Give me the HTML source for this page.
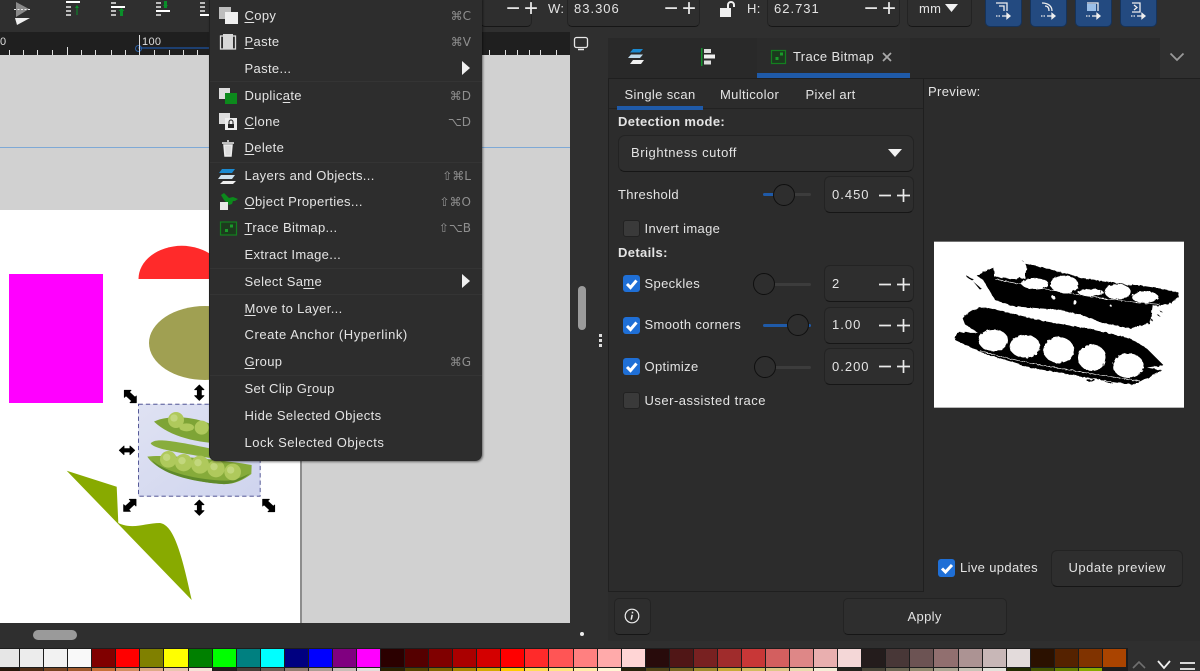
<!DOCTYPE html>
<html><head><meta charset="utf-8"><style>
html,body{margin:0;padding:0;width:1200px;height:671px;overflow:hidden;background:#2f2f2f}
body{position:relative;font-family:"Liberation Sans","DejaVu Sans",sans-serif;font-size:13px;color:#e4e4e4;letter-spacing:.35px}
.a{position:absolute}
.t{position:absolute;white-space:nowrap;line-height:16px}
.m{margin-top:1px}
.b{position:absolute;box-sizing:border-box;background:#2e2e2e;border-radius:5px;border:1px solid #232323;border-bottom:1px solid #161616}
.s{color:#8f8f8f;font-family:"DejaVu Sans",sans-serif;font-size:12px;right:11px;letter-spacing:0}
.cb{position:absolute;width:17px;height:17px;border-radius:3px;box-sizing:border-box}
.on{background:#1f6fd6}
.off{background:#3a3a3a;border:1px solid #222}
.kn{position:absolute;width:20px;height:20px;border-radius:50%;background:#2e2e2e;border:1.5px solid #0f0f0f;box-sizing:border-box}
.tr{position:absolute;height:3px;background:#3c3c3c;border-radius:2px}
.sep{position:absolute;left:0;right:0;height:1px;background:#343434}
u{text-underline-offset:2px;text-decoration-thickness:1px}
svg{position:absolute;overflow:visible}
#sw{position:absolute;left:-4px;top:649px;width:1132px;display:grid;grid-template-columns:repeat(47,23.07px);grid-auto-rows:18px;gap:1px 1px}
#sw i{display:block}
</style></head><body>

<!-- top toolbar -->
<div class="a" style="left:0;top:0;width:1200px;height:32px;background:#2f2f2f"></div>
<svg style="left:0;top:0" width="210" height="32" viewBox="0 0 210 32">
<path d="M16 2L29 9 16 17z" fill="#8a8a8a"/><path d="M15 18H30L17 25z" fill="#f0f0f0"/><path d="M14 9.500H31" stroke="#e8e8e8" stroke-width="1" stroke-dasharray="2 1.500"/>
<g fill="#bbb"><rect x="66" y="6" width="5" height="2"/><rect x="66" y="10" width="5" height="2"/><rect x="66" y="14" width="5" height="2"/></g><rect x="66" y="1" width="14" height="2" fill="#fff"/><path d="M76.500 15V8h-1.500L77 5l2 3h-1.500v7z" fill="#0a8f2a"/>
<g fill="#bbb"><rect x="111" y="2" width="5" height="2"/><rect x="111" y="10" width="5" height="2"/><rect x="111" y="14" width="5" height="2"/></g><rect x="111" y="6" width="14" height="2" fill="#fff"/><rect x="120" y="10" width="3" height="6" fill="#0a8f2a"/><path d="M118.500 11L121.500 8l3 3z" fill="#0a8f2a"/>
<g fill="#bbb"><rect x="156" y="2" width="5" height="2"/><rect x="156" y="6" width="5" height="2"/><rect x="156" y="14" width="5" height="2"/></g><rect x="156" y="10" width="14" height="2" fill="#fff"/><rect x="164" y="1" width="3" height="7" fill="#0a8f2a"/><path d="M163 5h5l-2.500 3z" fill="#0a8f2a"/>
<g fill="#bbb"><rect x="200" y="2" width="5" height="2"/><rect x="200" y="6" width="5" height="2"/><rect x="200" y="10" width="5" height="2"/></g><rect x="200" y="14" width="10" height="2" fill="#fff"/>
</svg>

<!-- ruler -->
<div class="a" style="left:0;top:32px;width:570px;height:23px;background:#1f1f1f"></div>
<div class="t" style="left:0;top:34px;font-size:11px;color:#ddd">0</div>
<div class="t" style="left:142px;top:34px;font-size:11px;color:#ddd">100</div>
<div class="a" style="left:138px;top:47px;width:72px;height:2px;background:#1d3f70"></div>
<div class="a" style="left:135px;top:45px;width:5px;height:5px;border:1px solid #2a5fa5;border-radius:50%"></div>
<svg style="left:0;top:32px" width="570" height="23" id="rul"><path d="M9.500 18v5M23.500 18v5M37.500 18v5M52.500 18v5M67.500 15v8M81.500 18v5M95.500 18v5M111.500 18v5M125.500 18v5M139.500 3v20M154.500 18v5M169.500 18v5M183.500 18v5M197.500 18v5M489.500 18v5M505.500 18v5M517.500 18v5M529.500 18v5M540.500 18v5M556.500 18v5" stroke="#e0e0e0" stroke-width="1" fill="none"/></svg>

<!-- canvas -->
<div class="a" style="left:0;top:55px;width:570px;height:568px;background:#d1d1d1"></div>
<div class="a" style="left:0;top:147px;width:570px;height:1px;background:#7ea9d6"></div>
<div class="a" style="left:0;top:210px;width:300px;height:413px;background:#fff"></div>
<div class="a" style="left:300px;top:212px;width:2px;height:411px;background:#8d8d8d"></div>
<div class="a" style="left:9px;top:274px;width:94px;height:129px;background:#ff00ff"></div>
<svg style="left:0;top:210px" width="300" height="413" viewBox="0 210 300 413">
<path d="M138.500 279A43 33 0 0 1 225 279z" fill="#ff2a2a"/>
<ellipse cx="205" cy="343" rx="56" ry="37" fill="#a0a052"/>
<path d="M66.700 470.700L116.700 486.700 118.300 523C133 530 145 523 160 523 172 525 180 545 191.700 600z" fill="#88aa00"/>
</svg>

<!-- photo -->
<svg style="left:110px;top:380px" width="180" height="140" viewBox="0 0 540 420">
<defs><linearGradient id="pg" x1="0" y1="0" x2="1" y2="1"><stop offset="0" stop-color="#dfe2f3"/><stop offset="1" stop-color="#cfd4ee"/></linearGradient></defs>
<rect x="85" y="72" width="366" height="277" fill="url(#pg)"/>
<path d="M132 125C165 108 250 100 335 148L355 192C260 190 180 170 132 125z" fill="#7ea436"/>
<path d="M122 190C135 175 170 178 300 205L345 242C220 218 135 210 122 190z" fill="#88ad3c"/>
<path d="M112 230C170 222 340 240 425 255L424 282C400 300 370 315 335 312 240 305 140 275 112 230z" fill="#86ab3a"/>
<path d="M125 240C170 280 270 300 345 302 375 302 400 290 420 280 395 302 365 314 335 312 240 305 150 280 125 240z" fill="#5f8a2a"/>
<g fill="#afc95c"><circle cx="198" cy="120" r="24"/><ellipse cx="230" cy="142" rx="22" ry="12"/><circle cx="275" cy="143" r="21"/><circle cx="175" cy="238" r="25"/><circle cx="221" cy="248" r="26"/><circle cx="270" cy="254" r="27"/><circle cx="318" cy="266" r="26"/><circle cx="368" cy="276" r="25"/></g>
<g fill="#d3e398" opacity=".55"><circle cx="192" cy="114" r="11"/><circle cx="170" cy="232" r="11"/><circle cx="216" cy="242" r="11"/><circle cx="264" cy="248" r="11"/><circle cx="312" cy="260" r="11"/><circle cx="362" cy="270" r="11"/></g>
<rect x="85.500" y="72.500" width="365" height="276" fill="none" stroke="#3a3f86" stroke-width="2.500" stroke-dasharray="13 9"/>
<g fill="#000" stroke="#000" stroke-width="2.500" stroke-linejoin="round">
<path d="M268 15l-14 14h8v18h-8l14 14 14-14h-8V29h8z"/>
<path d="M268 360l-14 14h8v18h-8l14 14 14-14h-8v-18h8z"/>
<path d="M28 211l14-13v8h18v-8l14 13-14 13v-8H42v8z"/>
<path d="M43 31h20l-5 5 17 16 4-4v20H60l5-5-17-16-5 5z"/>
<path d="M78 358v20l-5-5-17 16 5 5H41v-20l5 5 17-16-5-5z"/>
<path d="M458 358h20l-5 5 17 16 4-4v20h-20l5-5-17-16-4 4z"/>
</g></svg>

<!-- canvas right strip -->
<div class="a" style="left:570px;top:32px;width:38px;height:609px;background:#2f2f2f"></div>
<svg style="left:573px;top:36px" width="18" height="16"><rect x="1.500" y="1.500" width="13" height="10" rx="2" fill="none" stroke="#e8e8e8" stroke-width="1.300"/><path d="M5 13.500h6" stroke="#e8e8e8" stroke-width="1.500"/></svg>
<div class="a" style="left:578px;top:286px;width:8px;height:44px;background:#9b9b9b;border-radius:4px"></div>
<div class="a" style="left:599px;top:334px;width:3px;height:3px;background:#ddd;box-shadow:0 5px 0 #ddd,0 10px 0 #ddd"></div>
<div class="a" style="left:0;top:623px;width:592px;height:26px;background:#2f2f2f"></div>
<div class="a" style="left:33px;top:630px;width:44px;height:10px;background:#9a9a9a;border-radius:5px"></div>
<div class="a" style="left:580px;top:632px;width:4px;height:4px;background:#eee;border-radius:50%"></div>

<!-- top right inputs -->
<div class="b" style="left:480px;top:-6px;width:52px;height:33px"></div>
<div class="t" style="left:506px;top:0;font-size:24px;font-weight:400;color:#e8e8e8;letter-spacing:4px;line-height:18px">−+</div>
<div class="t" style="left:548px;top:1px">W:</div>
<div class="b" style="left:567px;top:-6px;width:133px;height:33px"></div>
<div class="t" style="left:574px;top:1px;letter-spacing:1px">83.306</div>
<div class="t" style="left:664px;top:0;font-size:24px;color:#e8e8e8;letter-spacing:4px;line-height:18px">−+</div>
<svg style="left:718px;top:0" width="20" height="18"><path d="M2 8h11v9H2z" fill="#f0f0f0"/><path d="M10 8V5a3 3 0 0 1 6 0v2" fill="none" stroke="#f0f0f0" stroke-width="2"/></svg>
<div class="t" style="left:747px;top:1px">H:</div>
<div class="b" style="left:767px;top:-6px;width:133px;height:33px"></div>
<div class="t" style="left:774px;top:1px;letter-spacing:1px">62.731</div>
<div class="t" style="left:864px;top:0;font-size:24px;color:#e8e8e8;letter-spacing:4px;line-height:18px">−+</div>
<div class="b" style="left:907px;top:-6px;width:65px;height:33px"></div>
<div class="t" style="left:919px;top:1px">mm</div>
<svg style="left:945px;top:4px" width="14" height="9"><path d="M0 0h13L6.500 8z" fill="#f0f0f0"/></svg>
<div class="a" style="left:985px;top:-6px;width:37px;height:33px;background:#234a80;border-radius:5px;border:1px solid #16335a;box-sizing:border-box"></div>
<div class="a" style="left:1030px;top:-6px;width:37px;height:33px;background:#234a80;border-radius:5px;border:1px solid #16335a;box-sizing:border-box"></div>
<div class="a" style="left:1075px;top:-6px;width:37px;height:33px;background:#234a80;border-radius:5px;border:1px solid #16335a;box-sizing:border-box"></div>
<div class="a" style="left:1120px;top:-6px;width:37px;height:33px;background:#234a80;border-radius:5px;border:1px solid #16335a;box-sizing:border-box"></div>
<svg style="left:985px;top:0" width="175" height="20" fill="none" stroke="#eee" stroke-width="1.300">
<path d="M11 3h11v8M14 6h5v5M17 16h8"/><path d="M22 13.500l3 2.500-3 2.500z" fill="#eee"/><path d="M11 16h4" stroke-dasharray="1.500 1"/>
<path d="M57 3c6 0 10 3 10 8M60 6c3 0 4 2 4 5M62 16h8"/><path d="M67 13.500l3 2.500-3 2.500z" fill="#eee"/><path d="M56 16h4" stroke-dasharray="1.500 1"/>
<path d="M102 3h11v8"/><rect x="102" y="4" width="9" height="7" fill="#9bbfe8" stroke="none"/><path d="M107 16h8"/><path d="M112 13.500l3 2.500-3 2.500z" fill="#eee"/><path d="M101 16h4" stroke-dasharray="1.500 1"/>
<path d="M147 3h8v9h-8M149 5l3 2.500-3 2.500M152 16h8"/><path d="M157 13.500l3 2.500-3 2.500z" fill="#eee"/><path d="M146 16h4" stroke-dasharray="1.500 1"/>
</svg>

<!-- menu -->
<div class="a" style="left:209px;top:-2px;width:273px;height:463px;background:#2d2d2d;border-radius:0 0 7px 7px;border-left:1px solid #202020;box-sizing:border-box;box-shadow:1px 1px 2px rgba(0,0,0,.5)">
<div class="sep" style="top:83px"></div><div class="sep" style="top:164px"></div><div class="sep" style="top:270px"></div><div class="sep" style="top:296px"></div><div class="sep" style="top:377px"></div>
</div>
<div class="t m" style="left:244.500px;top:7px"><u>C</u>opy</div>
<div class="t m" style="left:244.500px;top:33px"><u>P</u>aste</div>
<div class="t m" style="left:244.500px;top:60px">Paste...</div>
<div class="t m" style="left:244.500px;top:87px">Duplic<u>a</u>te</div>
<div class="t m" style="left:244.500px;top:113px"><u>C</u>lone</div>
<div class="t m" style="left:244.500px;top:139px"><u>D</u>elete</div>
<div class="t m" style="left:244.500px;top:167px">Layers and Objects...</div>
<div class="t m" style="left:244.500px;top:193px"><u>O</u>bject Properties...</div>
<div class="t m" style="left:244.500px;top:219px"><u>T</u>race Bitmap...</div>
<div class="t m" style="left:244.500px;top:246px">Extract Image...</div>
<div class="t m" style="left:244.500px;top:273px">Select Sa<u>m</u>e</div>
<div class="t m" style="left:244.500px;top:300px"><u>M</u>ove to Layer...</div>
<div class="t m" style="left:244.500px;top:326px;letter-spacing:.55px">Create Anchor (Hyperlink)</div>
<div class="t m" style="left:244.500px;top:353px"><u>G</u>roup</div>
<div class="t m" style="left:244.500px;top:380px">Set Clip G<u>r</u>oup</div>
<div class="t m" style="left:244.500px;top:407px;letter-spacing:.4px">Hide Selected Objects</div>
<div class="t m" style="left:244.500px;top:434px;letter-spacing:.5px">Lock Selected Objects</div>
<div class="t s m" style="right:729px;top:7px">⌘C</div>
<div class="t s m" style="right:729px;top:33px">⌘V</div>
<div class="t s m" style="right:729px;top:87px">⌘D</div>
<div class="t s m" style="right:729px;top:113px">⌥D</div>
<div class="t s m" style="right:729px;top:167px">⇧⌘L</div>
<div class="t s m" style="right:729px;top:193px">⇧⌘O</div>
<div class="t s m" style="right:729px;top:219px">⇧⌥B</div>
<div class="t s m" style="right:729px;top:353px">⌘G</div>
<svg style="left:210px;top:0" width="272" height="300">
<path d="M252 61l8 7-8 7z" fill="#f0f0f0"/><path d="M252 274l8 7-8 7z" fill="#f0f0f0"/>
<!-- copy -->
<rect x="9" y="7" width="12" height="12" fill="#bdbdbd"/><rect x="15" y="12" width="13" height="12" fill="#efefef"/>
<!-- paste -->
<rect x="10.500" y="36" width="15" height="13" fill="none" stroke="#ddd" stroke-width="1.300"/><rect x="13" y="34" width="10" height="15" fill="#d8d8d8"/>
<!-- duplicate -->
<rect x="9" y="88" width="11" height="11" fill="#ddd"/><rect x="15" y="93" width="12" height="11" fill="#0c8a1c"/>
<!-- clone -->
<rect x="9" y="113" width="11" height="11" fill="#ddd"/><rect x="15" y="118" width="12" height="12" fill="#eee"/><path d="M18 124h6v4h-6z" fill="#222"/><path d="M19 124v-2a2 2 0 0 1 4 0v2" stroke="#222" fill="none"/>
<!-- trash -->
<path d="M12 143h12M17 141h2M14 145l1 11h6l1-11z" stroke="#eee" stroke-width="1.500" fill="#ddd"/>
<!-- layers -->
<path d="M12 169h13l-3 4H9z" fill="#1b8ad1"/><path d="M11 175h14l-3 4H8z" fill="#cfe2ef"/><path d="M13 181h13l-3 3H10z" fill="#eee"/>
<!-- properties -->
<path d="M11 195l3-2 5 5 4-1 5 2-3 2-2 0-1 3-3 1-5-5z" fill="#0c8a1c"/><rect x="10" y="202" width="8" height="8" fill="#e8e8e8"/>
<!-- trace -->
<rect x="10.500" y="222" width="16" height="13" fill="#1d3a1e" stroke="#13801f" stroke-width="1.200"/><rect x="20" y="224.500" width="3" height="3" fill="#1a9a2a"/><rect x="15" y="229" width="3" height="3" fill="#1a9a2a"/>
</svg>

<!-- dock panel -->
<div class="a" style="left:608px;top:38px;width:592px;height:603px;background:#2c2c2c"></div>
<div class="a" style="left:608px;top:38px;width:149px;height:40px;background:#292929"></div>
<div class="a" style="left:757px;top:38px;width:153px;height:40px;background:#2b2b2b"></div>
<div class="a" style="left:757px;top:73px;width:153px;height:5px;background:#1f5aa8"></div>
<div class="a" style="left:910px;top:38px;width:250px;height:40px;background:#292929"></div>
<div class="a" style="left:608px;top:78px;width:592px;height:1px;background:#1f1f1f"></div>
<div class="a" style="left:1160px;top:38px;width:40px;height:40px;background:#2f2f2f"></div>
<svg style="left:625px;top:45px" width="100" height="25">
<path d="M8 4h10l-3 3.500H5z" fill="#1b8ad1"/><path d="M6 9.500h12l-3 3.500H3z" fill="#bfdbec"/><path d="M8 15h11l-3 4H5z" fill="#f0f0f0"/>
<rect x="76" y="3" width="1.500" height="18" fill="#12902a"/><rect x="79" y="4" width="7" height="4" fill="#ddd"/><rect x="79" y="9.500" width="11" height="4" fill="#f0f0f0"/><rect x="79" y="15.500" width="7" height="4" fill="#ddd"/>
</svg>
<svg style="left:770px;top:48px" width="20" height="18"><rect x="1.500" y="2.500" width="14" height="13" fill="#1c3a1e" stroke="#13801f" stroke-width="1.200"/><rect x="10" y="4.500" width="3" height="3" fill="#1a9a2a"/><rect x="5.500" y="9" width="3" height="3" fill="#1a9a2a"/></svg>
<div class="t" style="left:793px;top:49px">Trace Bitmap</div>
<svg style="left:881px;top:51px" width="12" height="12"><path d="M2 2l8 8M10 2l-8 8" stroke="#aaa" stroke-width="1.700"/></svg>
<svg style="left:1169px;top:52px" width="16" height="10"><path d="M1.500 1.500L8 8l6.500-6.500" stroke="#9a9a9a" stroke-width="1.800" fill="none"/></svg>

<!-- left subpanel -->
<div class="a" style="left:608px;top:79px;width:316px;height:513px;background:#2c2c2c;border-right:1px solid #1f1f1f;border-bottom:1px solid #1f1f1f;border-left:1px solid #1f1f1f;box-sizing:border-box"></div>
<div class="a" style="left:609px;top:108px;width:314px;height:1px;background:#222"></div>
<div class="t" style="left:624.500px;top:87px">Single scan</div>
<div class="a" style="left:617px;top:106px;width:86px;height:4px;background:#1f5aa8"></div>
<div class="t" style="left:720px;top:87px">Multicolor</div>
<div class="t" style="left:805.500px;top:87px">Pixel art</div>
<div class="t" style="left:928px;top:84px">Preview:</div>

<div class="t" style="left:618px;top:114px;font-weight:700">Detection mode:</div>
<div class="b" style="left:618px;top:135px;width:296px;height:37px;border-radius:7px"></div>
<div class="t" style="left:631px;top:145px;letter-spacing:.55px">Brightness cutoff</div>
<svg style="left:888px;top:149px" width="14" height="9"><path d="M0 0h14L7 8z" fill="#f2f2f2"/></svg>

<div class="t" style="left:618px;top:187px">Threshold</div>
<div class="tr" style="left:763px;top:193px;width:48px"></div><div class="tr" style="left:763px;top:193px;width:12px;background:#1f5aa8"></div>
<div class="kn" style="left:773px;top:184px;width:22px;height:22px"></div>
<div class="b" style="left:824px;top:176px;width:90px;height:37px;border-radius:6px"></div>
<div class="t" style="left:832px;top:187px;letter-spacing:1px">0.450</div>

<div class="cb off" style="left:623px;top:220px"></div>
<div class="t" style="left:644.500px;top:221px">Invert image</div>
<div class="t" style="left:618px;top:245px;font-weight:700">Details:</div>

<div class="cb on" style="left:623px;top:275px"></div>
<div class="t" style="left:644.500px;top:276px">Speckles</div>
<div class="tr" style="left:764px;top:283px;width:47px"></div>
<div class="kn" style="left:753px;top:273px;width:22px;height:22px"></div>
<div class="b" style="left:824px;top:265px;width:90px;height:37px;border-radius:6px"></div>
<div class="t" style="left:832px;top:276px;letter-spacing:1px">2</div>

<div class="cb on" style="left:623px;top:317px"></div>
<div class="t" style="left:644.500px;top:317px">Smooth corners</div>
<div class="tr" style="left:763px;top:324px;width:48px;background:#1f5aa8"></div>
<div class="kn" style="left:787px;top:314px;width:22px;height:22px"></div>
<div class="b" style="left:824px;top:307px;width:90px;height:37px;border-radius:6px"></div>
<div class="t" style="left:832px;top:317px;letter-spacing:1px">1.00</div>

<div class="cb on" style="left:623px;top:358px"></div>
<div class="t" style="left:644.500px;top:359px">Optimize</div>
<div class="tr" style="left:764px;top:366px;width:47px"></div>
<div class="kn" style="left:754px;top:356px;width:22px;height:22px"></div>
<div class="b" style="left:824px;top:348px;width:90px;height:37px;border-radius:6px"></div>
<div class="t" style="left:832px;top:359px;letter-spacing:1px">0.200</div>

<div class="cb off" style="left:623px;top:392px"></div>
<div class="t" style="left:644.500px;top:393px;letter-spacing:.5px">User-assisted trace</div>

<svg style="left:878px;top:185px" width="30" height="200" stroke="#eaeaea" stroke-width="1.700" fill="none">
<path d="M1 10.500h12M19 10.500h13M25.500 4v13"/>
<path d="M1 99.500h12M19 99.500h13M25.500 93v13"/>
<path d="M1 140.500h12M19 140.500h13M25.500 134v13"/>
<path d="M1 181.500h12M19 181.500h13M25.500 175v13"/>
</svg>
<svg style="left:623px;top:275px" width="17" height="100" stroke="#fff" stroke-width="3" fill="none">
<path d="M4 9l3.500 3.500L13.500 5.500"/><path d="M4 51l3.500 3.500L13.500 47.500"/><path d="M4 92l3.500 3.500L13.500 88.500"/>
</svg>

<!-- preview -->
<svg style="left:930px;top:235px" width="260" height="180" viewBox="0 0 780 540">
<defs><filter id="j" x="-5%" y="-5%" width="110%" height="110%"><feTurbulence type="fractalNoise" baseFrequency=".09" numOctaves="2" seed="4"/><feDisplacementMap in="SourceGraphic" scale="9"/></filter></defs>
<rect x="12" y="20" width="750" height="498" fill="#fff"/>
<g filter="url(#j)">
<path d="M140 122L192 97 192 125 285 130 285 86 340 98 440 124 450 128 600 150 610 148 700 162 745 172 745 185 718 208 668 212 660 265 600 280 520 264 450 238 380 224 250 214 195 195 160 135z"/>
<path d="M258 70l22 8-3 4-20-8zM110 122l22 12-4 4-18-12zM130 140l24 20-6 2z"/>
<g fill="#fff"><ellipse cx="240" cy="100" rx="50" ry="34"/><ellipse cx="315" cy="146" rx="40" ry="16"/><ellipse cx="403" cy="148" rx="42" ry="26"/><ellipse cx="482" cy="172" rx="38" ry="11"/><ellipse cx="563" cy="170" rx="39" ry="23"/><ellipse cx="645" cy="186" rx="40" ry="17"/></g>
<path d="M205 127l70 8 0 6-70-8z"/>
<path d="M195 132C280 150 500 195 690 208" stroke="#fff" stroke-width="2" fill="none"/>
<path d="M510 150l6 0-3 30zM605 148l5 0 0 25z"/>
<g fill="#fff"><circle cx="435" cy="203" r="6"/><circle cx="370" cy="187" r="5"/><circle cx="542" cy="212" r="3"/></g>
<path d="M98 250Q125 215 170 218L240 234 340 258 480 282 600 310 650 340 700 390 650 398 695 405 610 450 500 432 300 398 160 354 75 315 80 292 142 292 105 268z"/>
<g fill="#fff"><ellipse cx="190" cy="316" rx="44" ry="33"/><ellipse cx="285" cy="334" rx="46" ry="34"/><ellipse cx="386" cy="345" rx="46" ry="39"/><ellipse cx="486" cy="368" rx="42" ry="40"/><ellipse cx="595" cy="392" rx="46" ry="37"/></g>
<path d="M150 347C260 382 450 412 630 438" stroke="#fff" stroke-width="2" fill="none"/>
<path d="M690 228l8 3-3 3zM680 238l10 4-3 3zM660 250l8 4-3 4zM470 433h25v5h-25zM520 437l28 5-6 4z"/>
</g>
</svg>

<!-- bottom controls -->
<div class="cb on" style="left:938px;top:559px;height:18px"></div>
<svg style="left:938px;top:559px" width="18" height="18"><path d="M4 9.500l3.500 3.500L14 6" stroke="#fff" stroke-width="3" fill="none"/></svg>
<div class="t" style="left:960px;top:560px">Live updates</div>
<div class="b" style="left:1051px;top:550px;width:132px;height:37px;border-radius:6px"></div>
<div class="t" style="left:1068.500px;top:560px;letter-spacing:.5px">Update preview</div>
<div class="b" style="left:614px;top:598px;width:37px;height:37px;border-radius:5px"></div>
<svg style="left:624px;top:608px" width="17" height="17"><circle cx="8" cy="8" r="6.800" fill="none" stroke="#eee" stroke-width="1.200"/><path d="M8.500 3.800v1.600M8.200 6.800l-1 4.800" stroke="#eee" stroke-width="1.500"/></svg>
<div class="b" style="left:843px;top:598px;width:164px;height:37px;border-radius:5px"></div>
<div class="t" style="left:907.500px;top:609px">Apply</div>

<!-- palette -->
<div class="a" style="left:0;top:641px;width:1200px;height:30px;background:#2f2f2f"></div>
<div class="a" style="left:0;top:648px;width:1128px;height:23px;background:#1d1d1d"></div>
<div id="sw">
<i style="background:#e6e6e6"></i><i style="background:#ececec"></i><i style="background:#f2f2f2"></i><i style="background:#f9f9f9"></i><i style="background:#800000"></i><i style="background:#f00"></i><i style="background:#808000"></i><i style="background:#ff0"></i><i style="background:#008000"></i><i style="background:#0f0"></i><i style="background:#008080"></i><i style="background:#0ff"></i><i style="background:#000080"></i><i style="background:#00f"></i><i style="background:#800080"></i><i style="background:#f0f"></i><i style="background:#2b0000"></i><i style="background:#500"></i><i style="background:#800000"></i><i style="background:#a00"></i><i style="background:#d40000"></i><i style="background:#f00"></i><i style="background:#ff2a2a"></i><i style="background:#f55"></i><i style="background:#ff8080"></i><i style="background:#faa"></i><i style="background:#ffd5d5"></i><i style="background:#280b0b"></i><i style="background:#501616"></i><i style="background:#782121"></i><i style="background:#a02c2c"></i><i style="background:#c83737"></i><i style="background:#d35f5f"></i><i style="background:#de8787"></i><i style="background:#e9afaf"></i><i style="background:#f4d7d7"></i><i style="background:#241c1c"></i><i style="background:#483737"></i><i style="background:#6c5353"></i><i style="background:#916f6f"></i><i style="background:#ac9393"></i><i style="background:#c8b7b7"></i><i style="background:#e3dbdb"></i><i style="background:#2b1100"></i><i style="background:#520"></i><i style="background:#803300"></i><i style="background:#a40"></i>
<i style="background:#28170b"></i><i style="background:#502d16"></i><i style="background:#784421"></i><i style="background:#a05a2c"></i><i style="background:#c87137"></i><i style="background:#d38d5f"></i><i style="background:#deaa87"></i><i style="background:#e9c6af"></i><i style="background:#f4e3d7"></i><i style="background:#241f1c"></i><i style="background:#483e37"></i><i style="background:#6c5d53"></i><i style="background:#917c6f"></i><i style="background:#ac9d93"></i><i style="background:#c8beb7"></i><i style="background:#e3dedb"></i><i style="background:#2b2200"></i><i style="background:#540"></i><i style="background:#806600"></i><i style="background:#a80"></i><i style="background:#d4aa00"></i><i style="background:#fc0"></i><i style="background:#fd5"></i><i style="background:#ffe680"></i><i style="background:#fea"></i><i style="background:#fff6d5"></i><i style="background:#28220b"></i><i style="background:#504416"></i><i style="background:#786721"></i><i style="background:#a08c2c"></i><i style="background:#c8ab37"></i><i style="background:#d3bc5f"></i><i style="background:#dec887"></i><i style="background:#e9ddaf"></i><i style="background:#f4eed7"></i><i style="background:#24221c"></i><i style="background:#484537"></i><i style="background:#6c6753"></i><i style="background:#918a6f"></i><i style="background:#aca793"></i><i style="background:#c8c4b7"></i><i style="background:#e3e3db"></i><i style="background:#222b00"></i><i style="background:#450"></i><i style="background:#668000"></i><i style="background:#8a0"></i>
</div>
<svg style="left:1128px;top:655px" width="72" height="16" fill="none">
<path d="M5 13l6-6 6 6" stroke="#707070" stroke-width="1.600"/>
<path d="M30 6l6 7 6-7" stroke="#f0f0f0" stroke-width="1.800"/>
<path d="M52 8h15M52 14h15" stroke="#d8d8d8" stroke-width="2"/>
</svg>
</body></html>
